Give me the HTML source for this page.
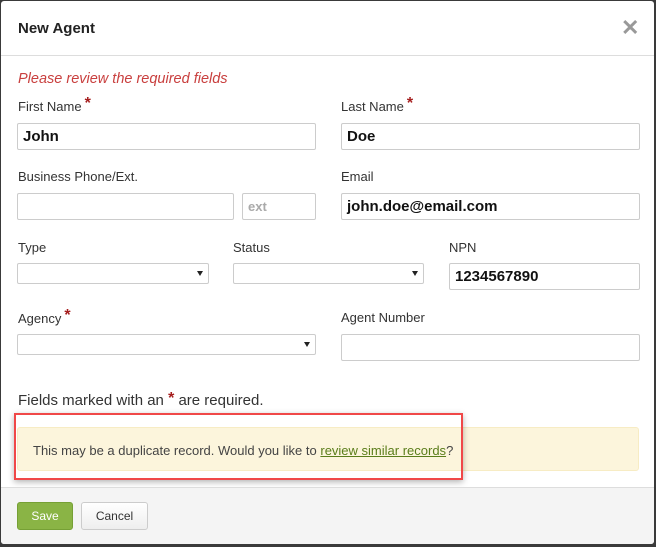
<!DOCTYPE html><html><head><style>
body{margin:0;width:656px;height:547px;background:#3a3a3a;font-family:"Liberation Sans",sans-serif;position:relative;overflow:hidden}
.m{position:absolute;left:1px;top:1px;width:653px;height:543px;background:#fff;border-radius:3px;overflow:hidden}
.a{position:absolute}
.l{position:absolute;font-size:13px;color:#333}
.s{color:#a51d1d;font-size:16px;font-weight:bold;margin-left:3px;position:relative;top:-3px}
.i{position:absolute;border:1px solid #ccc;border-radius:2px;background:#fff;box-sizing:border-box;font-size:15px;font-weight:bold;color:#111;padding:0 5px;line-height:25px}
.sel::after{content:"";position:absolute;right:5px;top:7px;border:3.5px solid transparent;border-top:5px solid #222}
</style></head><body><div class="m">
<div class="a" style="left:17px;top:19px;font-size:15px;font-weight:bold;color:#222">New Agent</div>
<div class="a" style="left:620px;top:14px;font-size:22px;font-weight:bold;color:#999">✕</div>
<div class="a" style="left:0;top:54px;width:653px;height:1px;background:#ddd"></div>
<div class="a" style="left:17px;top:70px;font-size:14.5px;font-style:italic;color:#c9403f">Please review the required fields</div>
<div class="l" style="left:17px;top:97px">First Name<span class="s">*</span></div>
<div class="l" style="left:340px;top:97px">Last Name<span class="s">*</span></div>
<div class="i" style="left:16px;top:122px;width:299px;height:27px">John</div>
<div class="i" style="left:340px;top:122px;width:299px;height:27px">Doe</div>
<div class="l" style="left:17px;top:168px">Business Phone/Ext.</div>
<div class="l" style="left:340px;top:168px">Email</div>
<div class="i" style="left:16px;top:192px;width:217px;height:27px"></div>
<div class="i" style="left:241px;top:192px;width:74px;height:27px;color:#aaa;font-size:13px">ext</div>
<div class="i" style="left:340px;top:192px;width:299px;height:27px">john.doe@email.com</div>
<div class="l" style="left:17px;top:239px">Type</div>
<div class="l" style="left:232px;top:239px">Status</div>
<div class="l" style="left:448px;top:239px">NPN</div>
<div class="i sel" style="left:16px;top:262px;width:192px;height:21px"></div>
<div class="i sel" style="left:232px;top:262px;width:191px;height:21px"></div>
<div class="i" style="left:448px;top:262px;width:191px;height:27px">1234567890</div>
<div class="l" style="left:17px;top:309px">Agency<span class="s">*</span></div>
<div class="l" style="left:340px;top:309px">Agent Number</div>
<div class="i sel" style="left:16px;top:333px;width:299px;height:21px"></div>
<div class="i" style="left:340px;top:333px;width:299px;height:27px"></div>
<div class="a" style="left:17px;top:391px;font-size:15px;color:#333">Fields marked with an <span class="s" style="margin:0;top:-2px">*</span> are required.</div>
<div class="a" style="left:16px;top:426px;width:622px;height:44px;background:#fcf5dc;border:1px solid #f7ecc4;border-radius:3px;box-sizing:border-box"></div>
<div class="a" style="left:32px;top:442px;font-size:13px;color:#444">This may be a duplicate record. Would you like to <span style="color:#5a7d1a;text-decoration:underline">review similar records</span>?</div>
<div class="a" style="left:13px;top:412px;width:449px;height:67px;border:2px solid #f04848;box-sizing:border-box;box-shadow:0 2px 6px rgba(0,0,0,.3)"></div>
<div class="a" style="left:0;top:486px;width:653px;height:60px;background:#f4f4f4;border-top:1px solid #ddd"></div>
<div class="a" style="left:16px;top:501px;width:56px;height:28px;background:#8ab445;border:1px solid #76a035;border-radius:3px;box-sizing:border-box;color:#fff;font-size:12px;text-align:center;line-height:26px">Save</div>
<div class="a" style="left:80px;top:501px;width:67px;height:28px;background:linear-gradient(#fff,#eee);border:1px solid #ccc;border-radius:3px;box-sizing:border-box;color:#333;font-size:12px;text-align:center;line-height:26px">Cancel</div>
</div></body></html>
